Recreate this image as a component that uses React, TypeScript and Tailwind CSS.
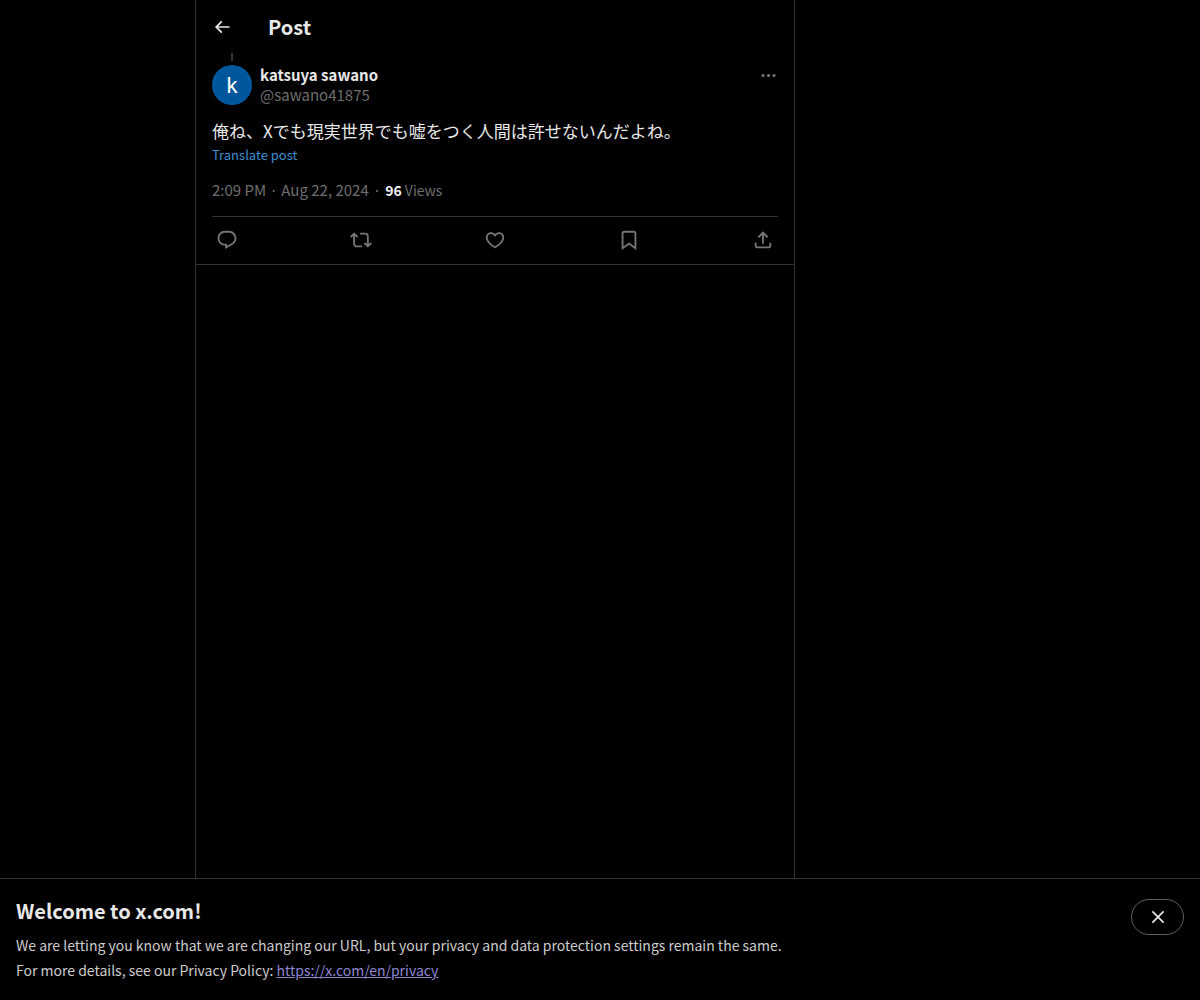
const ICON = {
  back: "M7.414 13l5.043 5.04-1.414 1.42L3.586 12l7.457-7.46 1.414 1.42L7.414 11H21v2H7.414z",
  more: "M3 12c0-1.1.9-2 2-2s2 .9 2 2-.9 2-2 2-2-.9-2-2zm9 2c1.1 0 2-.9 2-2s-.9-2-2-2-2 .9-2 2 .9 2 2 2zm7 0c1.1 0 2-.9 2-2s-.9-2-2-2-2 .9-2 2 .9 2 2 2z",
  reply: "M1.751 10c0-4.42 3.584-8 8.005-8h4.366c4.49 0 8.129 3.64 8.129 8.13 0 2.96-1.607 5.68-4.196 7.11l-8.054 4.46v-3.69h-.067c-4.49.1-8.183-3.51-8.183-8.01zm8.005-6c-3.317 0-6.005 2.69-6.005 6 0 3.37 2.77 6.08 6.138 6.01l.351-.01h1.761v2.3l5.087-2.81c1.951-1.08 3.163-3.13 3.163-5.36 0-3.39-2.744-6.13-6.129-6.13H9.756z",
  repost: "M4.5 3.88l4.432 4.14-1.364 1.46L5.5 7.55V16c0 1.1.896 2 2 2H13v2H7.5c-2.209 0-4-1.79-4-4V7.55L1.432 9.48.068 8.02 4.5 3.88zM16.5 6H11V4h5.5c2.209 0 4 1.79 4 4v8.45l2.068-1.93 1.364 1.46-4.432 4.14-4.432-4.14 1.364-1.46 2.068 1.93V8c0-1.1-.896-2-2-2z",
  like: "M16.697 5.5c-1.222-.06-2.679.51-3.89 2.16l-.805 1.09-.806-1.09C9.984 6.01 8.526 5.44 7.304 5.5c-1.243.07-2.349.78-2.91 1.91-.552 1.12-.633 2.78.479 4.82 1.074 1.97 3.257 4.27 7.129 6.61 3.87-2.34 6.052-4.64 7.126-6.61 1.111-2.04 1.03-3.7.477-4.82-.561-1.13-1.666-1.84-2.908-1.91zm4.187 7.69c-1.351 2.48-4.001 5.12-8.379 7.67l-.503.3-.504-.3c-4.379-2.55-7.029-5.19-8.382-7.67-1.36-2.5-1.41-4.86-.514-6.67.887-1.79 2.647-2.91 4.601-3.01 1.651-.09 3.368.56 4.798 2.01 1.429-1.45 3.146-2.1 4.796-2.01 1.954.1 3.714 1.22 4.601 3.01.896 1.81.846 4.17-.514 6.67z",
  bookmark: "M4 4.5C4 3.12 5.119 2 6.5 2h11C18.881 2 20 3.12 20 4.5v18.44l-8-5.71-8 5.71V4.5zM6.5 4c-.276 0-.5.22-.5.5v14.56l6-4.29 6 4.29V4.5c0-.28-.224-.5-.5-.5h-11z",
  share: "M12 2.59l5.7 5.7-1.41 1.42L13 6.41V16h-2V6.41l-3.3 3.3-1.41-1.42L12 2.59zM21 15l-.02 3.51c0 1.38-1.12 2.49-2.5 2.49H5.5C4.11 21 3 19.88 3 18.5V15h2v3.5c0 .28.22.5.5.5h12.98c.28 0 .5-.22.5-.5L19 15h2z",
  close: "M10.59 12L4.54 5.96l1.42-1.42L12 10.59l6.04-6.05 1.42 1.42L13.41 12l6.05 6.04-1.42 1.42L12 13.41l-6.04 6.05-1.42-1.42L10.59 12z",
};

function Icon({ d, className }: { d: string; className: string }) {
  return (
    <svg viewBox="0 0 24 24" fill="currentColor" aria-hidden="true" className={className}>
      <path d={d} />
    </svg>
  );
}

const actions = [
  { label: "Reply", d: ICON.reply },
  { label: "Repost", d: ICON.repost },
  { label: "Like", d: ICON.like },
  { label: "Bookmark", d: ICON.bookmark },
  { label: "Share post", d: ICON.share },
];

export default function App() {
  return (
    <div className="flex min-h-screen flex-col bg-black font-['Noto_Sans_CJK_JP','Noto_Sans',sans-serif] text-[#e8e8e8]">
      <main className="ml-[16.25%] flex w-full max-w-[600px] grow flex-col border-x border-[#333333]">
        <header className="flex h-[53px] items-center px-4">
          <button aria-label="Back" className="w-14">
            <Icon d={ICON.back} className="size-5" />
          </button>
          <h1 className="text-xl leading-6 font-bold">Post</h1>
        </header>
        <article className="border-b border-[#333333] px-4">
          <div className="flex h-3 w-10 justify-center">
            <div className="h-2 w-0.5 bg-[#333639]" />
          </div>
          <div className="flex gap-2">
            <div className="flex size-10 items-center justify-center rounded-full bg-[#01579b] font-['Roboto',sans-serif] text-[22px] text-white">
              k
            </div>
            <div className="grow text-[15px] leading-5">
              <div className="font-bold">katsuya sawano</div>
              <div className="text-[#6e6e6e]">@sawano41875</div>
            </div>
            <button aria-label="More" className="flex h-5 items-center text-[#767676]">
              <Icon d={ICON.more} className="size-[19px]" />
            </button>
          </div>
          <p className="mt-3.5 text-[17px] leading-6">俺ね、Xでも現実世界でも嘘をつく人間は許せないんだよね。</p>
          <button className="mt-1 block text-[13px] leading-4 text-[#3d8fd1]">Translate post</button>
          <div className="mt-[17px] mb-4 flex gap-1 text-[15px] leading-5 text-[#6e6e6e]">
            <a href="#post">2:09 PM · Aug 22, 2024</a>
            <span>·</span>
            <span className="text-[14px]"><b className="text-[#f2f2f2]">96</b> Views</span>
          </div>
          <div className="flex h-12 items-center justify-between border-t border-[#333333] px-1 pb-px">
            {actions.map((a) => (
              <button key={a.label} aria-label={a.label} className="text-[#767676]">
                <Icon d={a.d} className="size-[22px]" />
              </button>
            ))}
          </div>
        </article>
      </main>
      <section className="flex items-start justify-between border-t border-[#333333] px-4 pt-4 pb-[17px]">
        <div>
          <h2 className="text-xl leading-8 font-bold">Welcome to x.com!</h2>
          <p className="mt-1.5 text-[14px] leading-[25px] text-[#cccccc]">
            We are letting you know that we are changing our URL, but your privacy and data protection settings remain the same.
            <br />
            For more details, see our Privacy Policy: <a href="https://x.com/en/privacy" className="text-[#8d86d0] underline">https://x.com/en/privacy</a>
          </p>
        </div>
        <button aria-label="Close" className="mt-1 flex h-9 w-[53px] shrink-0 items-center justify-center rounded-full border border-[#606060]">
          <Icon d={ICON.close} className="size-5" />
        </button>
      </section>
    </div>
  );
}
